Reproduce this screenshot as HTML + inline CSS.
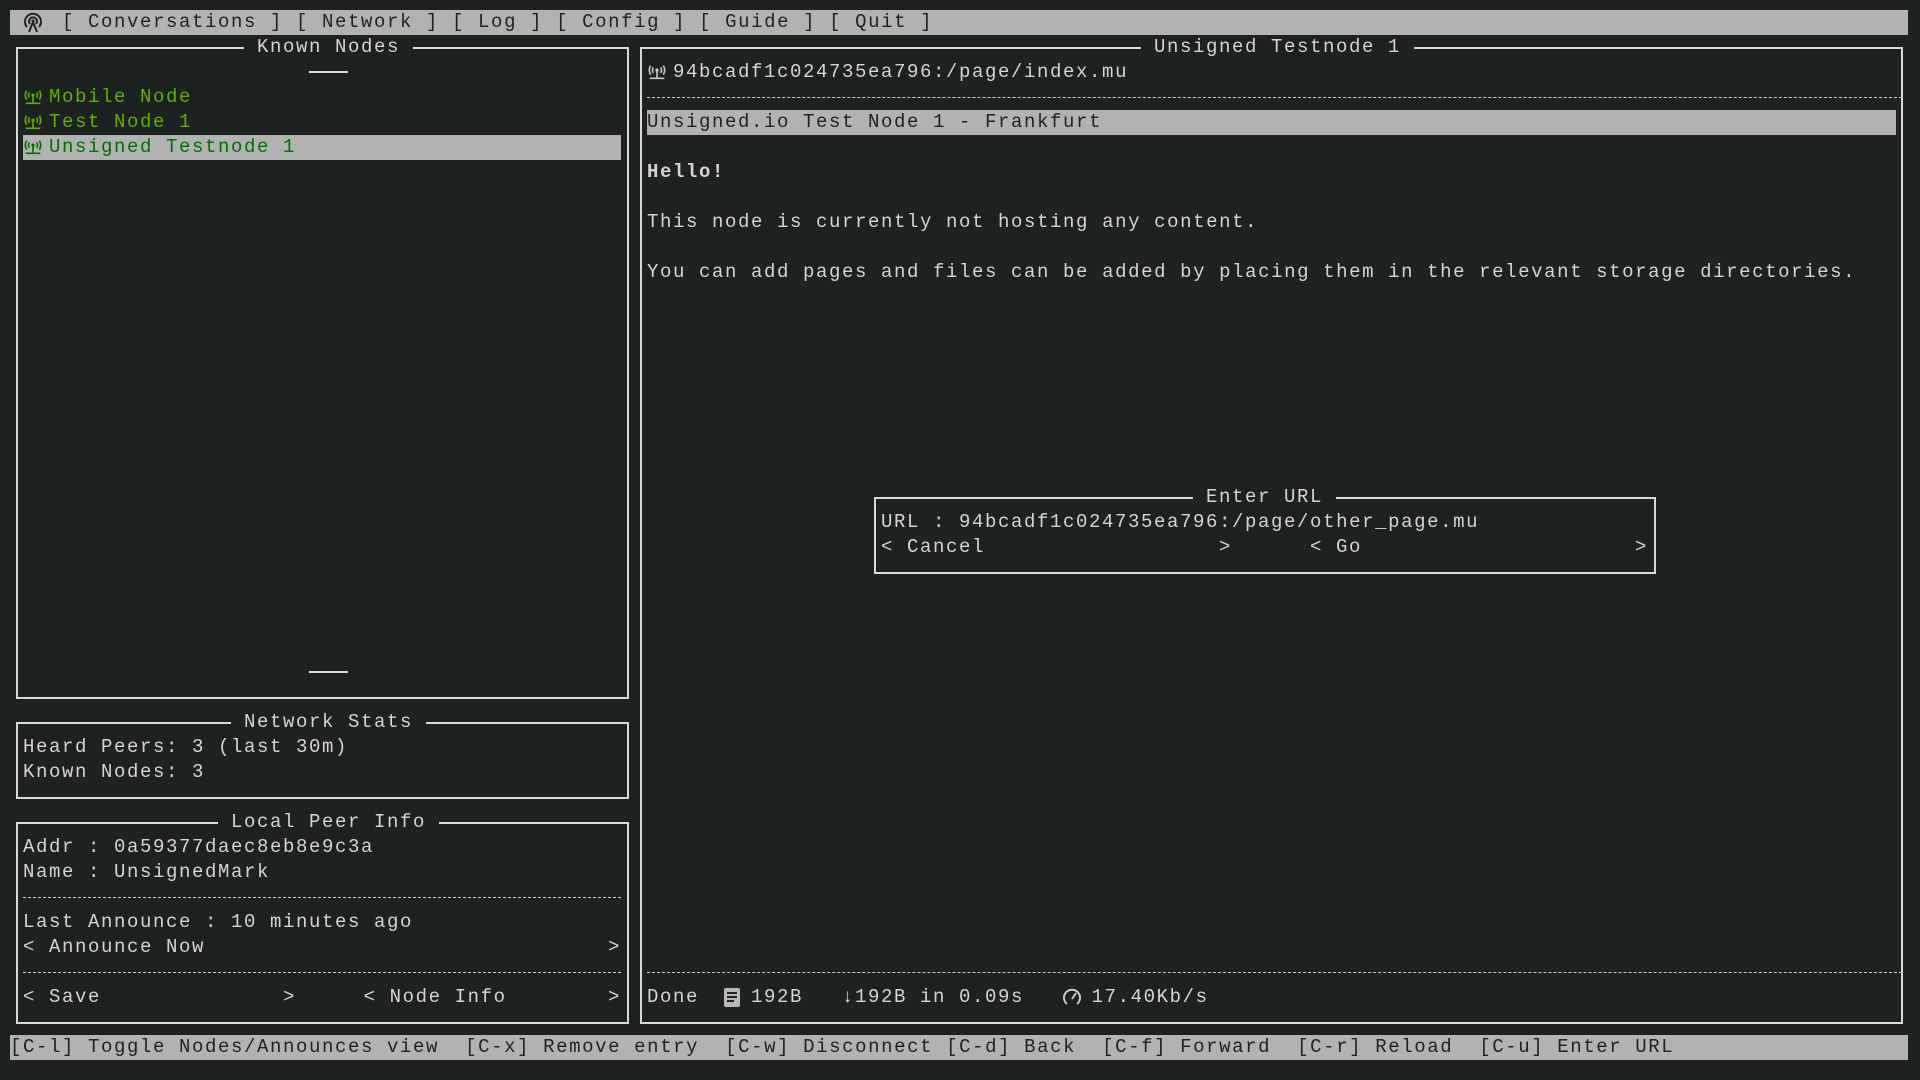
<!DOCTYPE html>
<html><head><meta charset="utf-8"><style>
html,body{margin:0;padding:0;background:#1e2122;width:1920px;height:1080px;overflow:hidden}
body{position:relative;font-family:"Liberation Mono","DejaVu Sans Mono",monospace;font-size:19px;letter-spacing:1.6px;color:#d4d4d0}
.t{position:absolute;left:calc(10px + var(--c)*13px);top:calc(10px + var(--r)*25px);height:25px;line-height:25px;white-space:pre}
.bar{position:absolute;left:10px;width:1898px;height:25px;background:#b2b2b2}
.box{position:absolute;left:calc(16px + var(--c1)*13px);top:calc(22px + var(--r1)*25px);width:calc((var(--c2) - var(--c1))*13px - 2px);height:calc((var(--r2) - var(--r1))*25px - 2px);border:2px solid #d8d8d4}
.ttl{background:#1e2122}
.dash{position:absolute;left:calc(10px + var(--c1)*13px);width:calc((var(--c2) - var(--c1))*13px);top:calc(22px + var(--r)*25px);border-top:1px dashed #c8c8c4}
.hl{position:absolute;height:25px;background:#b2b2b2}
.g{color:#5faf00}
.dk{color:#222}
.dg{color:#006f00}
svg{position:absolute}
</style></head><body>
<div class="bar" style="top:10px"></div>
<div class="bar" style="top:1035px"></div>
<svg style="left:22px;top:12px" width="22" height="22" viewBox="0 0 22 22"><g fill="none" stroke="#222" stroke-width="2"><path d="M5 15 A8 8 0 1 1 17 15"/><path d="M8 12 A4 4 0 1 1 14 12"/><path d="M11 10 L7 20 M11 10 L15 20"/></g><circle cx="11" cy="9" r="1.5" fill="#222"/></svg>
<div class="t dk" style="--c:4;--r:0">[ Conversations ] [ Network ] [ Log ] [ Config ] [ Guide ] [ Quit ]</div>
<div class="t dk" style="--c:0;--r:41">[C-l] Toggle Nodes/Announces view  [C-x] Remove entry  [C-w] Disconnect [C-d] Back  [C-f] Forward  [C-r] Reload  [C-u] Enter URL</div>

<div class="box" style="--c1:0;--r1:1;--c2:47;--r2:27"></div>
<div class="t" style="--c:18;--r:1"><span class="ttl"> Known Nodes </span></div>
<div style="position:absolute;left:309px;width:39px;top:71px;border-top:2px solid #d8d8d4"></div>
<div style="position:absolute;left:309px;width:39px;top:671px;border-top:2px solid #d8d8d4"></div>
<div class="hl" style="left:23px;width:598px;top:135px"></div>
<svg style="left:23px;top:87px" width="20" height="20" viewBox="0 0 22 20"><g fill="none" stroke="#5faf00" stroke-width="1.8"><path d="M4 3 Q1 8 4 13 M18 3 Q21 8 18 13 M7 5 Q5 8 7 11 M15 5 Q17 8 15 11"/><path d="M11 9 V17 M3 17 H19"/></g><circle cx="11" cy="8" r="1.8" fill="#5faf00"/></svg>
<svg style="left:23px;top:112px" width="20" height="20" viewBox="0 0 22 20"><g fill="none" stroke="#5faf00" stroke-width="1.8"><path d="M4 3 Q1 8 4 13 M18 3 Q21 8 18 13 M7 5 Q5 8 7 11 M15 5 Q17 8 15 11"/><path d="M11 9 V17 M3 17 H19"/></g><circle cx="11" cy="8" r="1.8" fill="#5faf00"/></svg>
<svg style="left:23px;top:137px" width="20" height="20" viewBox="0 0 22 20"><g fill="none" stroke="#006f00" stroke-width="1.8"><path d="M4 3 Q1 8 4 13 M18 3 Q21 8 18 13 M7 5 Q5 8 7 11 M15 5 Q17 8 15 11"/><path d="M11 9 V17 M3 17 H19"/></g><circle cx="11" cy="8" r="1.8" fill="#006f00"/></svg>
<div class="t g" style="--c:3;--r:3">Mobile Node</div>
<div class="t g" style="--c:3;--r:4">Test Node 1</div>
<div class="t dg" style="--c:3;--r:5">Unsigned Testnode 1</div>

<div class="box" style="--c1:0;--r1:28;--c2:47;--r2:31"></div>
<div class="t" style="--c:17;--r:28"><span class="ttl"> Network Stats </span></div>
<div class="t" style="--c:1;--r:29">Heard Peers: 3 (last 30m)</div>
<div class="t" style="--c:1;--r:30">Known Nodes: 3</div>

<div class="box" style="--c1:0;--r1:32;--c2:47;--r2:40"></div>
<div class="t" style="--c:16;--r:32"><span class="ttl"> Local Peer Info </span></div>
<div class="t" style="--c:1;--r:33">Addr : 0a59377daec8eb8e9c3a</div>
<div class="t" style="--c:1;--r:34">Name : UnsignedMark</div>
<div class="dash" style="--c1:1;--c2:47;--r:35"></div>
<div class="t" style="--c:1;--r:36">Last Announce : 10 minutes ago</div>
<div class="t" style="--c:1;--r:37">&lt; Announce Now</div>
<div class="t" style="--c:46;--r:37">&gt;</div>
<div class="dash" style="--c1:1;--c2:47;--r:38"></div>
<div class="t" style="--c:1;--r:39">&lt; Save</div>
<div class="t" style="--c:21;--r:39">&gt;</div>
<div class="t" style="--c:27.2;--r:39">&lt; Node Info</div>
<div class="t" style="--c:46;--r:39">&gt;</div>

<div class="box" style="--c1:48;--r1:1;--c2:145;--r2:40"></div>
<div class="t" style="--c:87;--r:1"><span class="ttl"> Unsigned Testnode 1 </span></div>
<svg style="left:647px;top:62px" width="20" height="20" viewBox="0 0 22 20"><g fill="none" stroke="#c8c8c4" stroke-width="1.8"><path d="M4 3 Q1 8 4 13 M18 3 Q21 8 18 13 M7 5 Q5 8 7 11 M15 5 Q17 8 15 11"/><path d="M11 9 V17 M3 17 H19"/></g><circle cx="11" cy="8" r="1.8" fill="#c8c8c4"/></svg>
<div class="t" style="--c:51;--r:2">94bcadf1c024735ea796:/page/index.mu</div>
<div class="dash" style="--c1:49;--c2:145.5;--r:3"></div>
<div class="hl" style="left:647px;width:1249px;top:110px"></div>
<div class="t dk" style="--c:49;--r:4">Unsigned.io Test Node 1 - Frankfurt</div>
<div class="t" style="--c:49;--r:6;font-weight:bold">Hello!</div>
<div class="t" style="--c:49;--r:8">This node is currently not hosting any content.</div>
<div class="t" style="--c:49;--r:10">You can add pages and files can be added by placing them in the relevant storage directories.</div>

<div class="box" style="--c1:66;--r1:19;--c2:126;--r2:22"></div>
<div class="t" style="--c:91;--r:19"><span class="ttl"> Enter URL </span></div>
<div class="t" style="--c:67;--r:20">URL : 94bcadf1c024735ea796:/page/other_page.mu</div>
<div class="t" style="--c:67;--r:21">&lt; Cancel</div>
<div class="t" style="--c:93;--r:21">&gt;</div>
<div class="t" style="--c:100;--r:21">&lt; Go</div>
<div class="t" style="--c:125;--r:21">&gt;</div>

<div class="dash" style="--c1:49;--c2:145.5;--r:38"></div>
<div class="t" style="--c:49;--r:39">Done</div>
<svg style="left:724px;top:988px" width="16" height="19" viewBox="0 0 16 19"><rect x="0" y="0" width="16" height="19" rx="2" fill="#b8b8b4"/><path d="M3 5 H13 M3 9 H13 M3 13 H10" stroke="#1e2122" stroke-width="2"/></svg>
<div class="t" style="--c:57;--r:39">192B</div>
<div class="t" style="--c:64;--r:39">↓192B in 0.09s</div>
<svg style="left:1062px;top:987px" width="20" height="20" viewBox="0 0 20 20"><g fill="none" stroke="#c8c8c4" stroke-width="2"><path d="M5 17 A8 8 0 1 1 15 17"/><path d="M10 12 L14 6"/></g></svg>
<div class="t" style="--c:83.2;--r:39">17.40Kb/s</div>
</body></html>
